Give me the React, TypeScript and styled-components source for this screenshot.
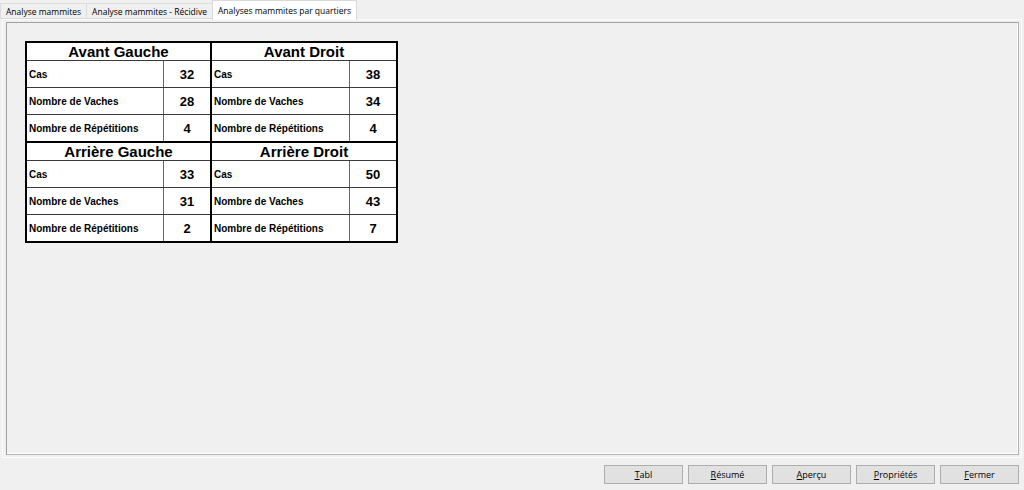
import React from 'react';
import styled, { createGlobalStyle } from 'styled-components';

const GlobalStyle = createGlobalStyle`
  html, body {
    margin: 0;
    padding: 0;
    background: #f0f0f0;
  }
`;

const Window = styled.div`
  width: 1024px;
  height: 490px;
  display: flex;
  flex-direction: column;
  background: #f0f0f0;
  font-family: 'Open Sans', 'Liberation Sans', sans-serif;
  overflow: hidden;
`;

const TabStrip = styled.div`
  display: flex;
  align-items: flex-end;
  height: 19px;
  flex-shrink: 0;
  position: relative;
  z-index: 1;
`;

const Tab = styled.div<{ $active?: boolean }>`
  height: ${p => (p.$active ? '20px' : '16px')};
  margin-bottom: ${p => (p.$active ? '-1px' : '0')};
  padding: 0 ${p => (p.$active ? '5px' : '5px')};
  display: flex;
  align-items: center;
  box-sizing: border-box;
  font-size: 8.5px;
  color: #000;
  white-space: nowrap;
  background: ${p => (p.$active ? '#ffffff' : '#f0f0f0')};
  border: 1px solid ${p => (p.$active ? '#d9d9d9' : '#dcdcdc')};
  border-bottom: ${p => (p.$active ? 'none' : '1px solid #d9d9d9')};
  margin-right: -1px;
`;

const Pane = styled.div`
  flex-shrink: 0;
  margin: 0 2px;
  border: 1px solid #fcfcfc;
  padding: 2px 2px 2px 3px;
  display: flex;
`;

const Frame = styled.div`
  flex: 1;
  border: 1px solid #a0a0a0;
  border-right-color: #b5b5b5;
  border-bottom-color: #b5b5b5;
  box-shadow: inset -1px -1px 0 #ffffff;
  padding: 18px;
  height: 433px;
  box-sizing: border-box;
`;

const Grid = styled.div`
  display: grid;
  grid-template-columns: 183px 184px;
  grid-template-rows: auto auto;
  gap: 2px;
  width: max-content;
  background: #000;
  border: 2px solid #000;
  font-family: 'Liberation Sans', Arial, sans-serif;
`;

const Quadrant = styled.div`
  background: #fff;
  display: flex;
  flex-direction: column;
`;

const Header = styled.div`
  height: 17px;
  line-height: 17px;
  text-align: center;
  font-weight: bold;
  font-size: 15px;
  border-bottom: 1px solid #3a3a3a;
`;

const Row = styled.div<{ $last?: boolean }>`
  display: grid;
  grid-template-columns: 1fr 46px;
  height: 26px;
  border-bottom: ${p => (p.$last ? 'none' : '1px solid #3a3a3a')};
`;

const Label = styled.div`
  display: flex;
  align-items: center;
  padding-left: 2px;
  font-size: 10px;
  font-weight: bold;
  border-right: 1px solid #6a6a6a;
`;

const Value = styled.div`
  display: flex;
  align-items: center;
  justify-content: center;
  font-size: 13px;
  font-weight: bold;
`;

const ButtonBar = styled.div`
  flex: 1;
  display: flex;
  justify-content: flex-end;
  align-items: center;
  gap: 5px;
  padding: 0 5px 0 0;
`;

const Button = styled.button`
  width: 79px;
  height: 19px;
  background: #e1e1e1;
  border: 1px solid #adadad;
  font-family: 'Open Sans', 'Liberation Sans', sans-serif;
  font-size: 9px;
  color: #000;
  padding: 0;
  u {
    text-decoration: underline;
  }
`;

type Stat = { label: string; value: number };
type QuarterData = { title: string; stats: Stat[] };

const quarters: QuarterData[] = [
  { title: 'Avant Gauche', stats: [{ label: 'Cas', value: 32 }, { label: 'Nombre de Vaches', value: 28 }, { label: 'Nombre de Répétitions', value: 4 }] },
  { title: 'Avant Droit', stats: [{ label: 'Cas', value: 38 }, { label: 'Nombre de Vaches', value: 34 }, { label: 'Nombre de Répétitions', value: 4 }] },
  { title: 'Arrière Gauche', stats: [{ label: 'Cas', value: 33 }, { label: 'Nombre de Vaches', value: 31 }, { label: 'Nombre de Répétitions', value: 2 }] },
  { title: 'Arrière Droit', stats: [{ label: 'Cas', value: 50 }, { label: 'Nombre de Vaches', value: 43 }, { label: 'Nombre de Répétitions', value: 7 }] }
];

const buttons = ['Tabl', 'Résumé', 'Aperçu', 'Propriétés', 'Fermer'];

const Quarter = ({ title, stats }: QuarterData) => (
  <Quadrant>
    <Header>{title}</Header>
    {stats.map((s, i) => (
      <Row key={s.label} $last={i === stats.length - 1}>
        <Label>{s.label}</Label>
        <Value>{s.value}</Value>
      </Row>
    ))}
  </Quadrant>
);

export default () => (
  <Window>
    <GlobalStyle />
    <TabStrip>
      <Tab>Analyse mammites</Tab>
      <Tab>Analyse mammites - Récidive</Tab>
      <Tab $active>Analyses mammites par quartiers</Tab>
    </TabStrip>
    <Pane>
      <Frame>
        <Grid>
          {quarters.map(q => (
            <Quarter key={q.title} {...q} />
          ))}
        </Grid>
      </Frame>
    </Pane>
    <ButtonBar>
      {buttons.map(b => (
        <Button key={b}>
          <u>{b[0]}</u>
          {b.slice(1)}
        </Button>
      ))}
    </ButtonBar>
  </Window>
);
